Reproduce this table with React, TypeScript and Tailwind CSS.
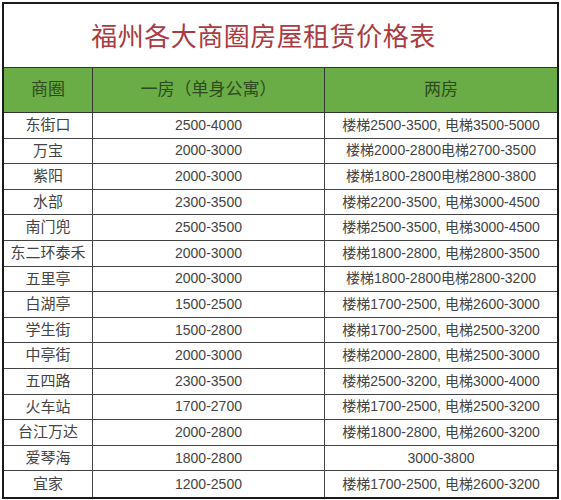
const rows: [string, string, string][] = [
  ["东街口", "2500-4000", "楼梯2500-3500, 电梯3500-5000"],
  ["万宝", "2000-3000", "楼梯2000-2800电梯2700-3500"],
  ["紫阳", "2000-3000", "楼梯1800-2800电梯2800-3800"],
  ["水部", "2300-3500", "楼梯2200-3500, 电梯3000-4500"],
  ["南门兜", "2500-3500", "楼梯2500-3500, 电梯3000-4500"],
  ["东二环泰禾", "2000-3000", "楼梯1800-2800, 电梯2800-3500"],
  ["五里亭", "2000-3000", "楼梯1800-2800电梯2800-3200"],
  ["白湖亭", "1500-2500", "楼梯1700-2500, 电梯2600-3000"],
  ["学生街", "1500-2800", "楼梯1700-2500, 电梯2500-3200"],
  ["中亭街", "2000-3000", "楼梯2000-2800, 电梯2500-3000"],
  ["五四路", "2300-3500", "楼梯2500-3200, 电梯3000-4000"],
  ["火车站", "1700-2700", "楼梯1700-2500, 电梯2500-3200"],
  ["台江万达", "2000-2800", "楼梯1800-2800, 电梯2600-3200"],
  ["爱琴海", "1800-2800", "3000-3800"],
  ["宜家", "1200-2500", "楼梯1700-2500, 电梯2600-3200"],
];

export default function App() {
  return (
    <div
      className="h-[500px] w-[561px] bg-white pl-[2px] pt-[2px]"
      style={{ fontFamily: '"Liberation Sans", "Noto Sans CJK SC", sans-serif' }}
    >
      <div className="w-[557px] border-2 border-[#1a1a1a]">
        <div className="flex h-[64px] items-center justify-center border-b border-[#333] pr-[34px] pt-[4px]">
          <h1 className="text-[26px] font-normal tracking-[0.5px] text-[#ac3a42]">
            福州各大商圈房屋租赁价格表
          </h1>
        </div>
        <div className="grid h-[45px] grid-cols-[89px_232px_1fr] border-b border-[#333] bg-[#6aac46] text-[17px] text-[#2f4a20]">
          <div className="flex items-center justify-center border-r border-[#333]">商圈</div>
          <div className="flex items-center justify-center border-r border-[#333]">一房（单身公寓）</div>
          <div className="flex items-center justify-center">两房</div>
        </div>
        {rows.map(([area, one, two], i) => (
          <div
            key={area}
            className={
              "grid h-[25.6px] grid-cols-[89px_232px_1fr] text-[14px] text-[#444] " +
              (i < rows.length - 1 ? "border-b border-[#444]" : "")
            }
          >
            <div className="flex items-center justify-center border-r border-[#444] text-[15px]">{area}</div>
            <div className="flex items-center justify-center border-r border-[#444]">{one}</div>
            <div className="flex items-center justify-center whitespace-nowrap">{two}</div>
          </div>
        ))}
      </div>
    </div>
  );
}
